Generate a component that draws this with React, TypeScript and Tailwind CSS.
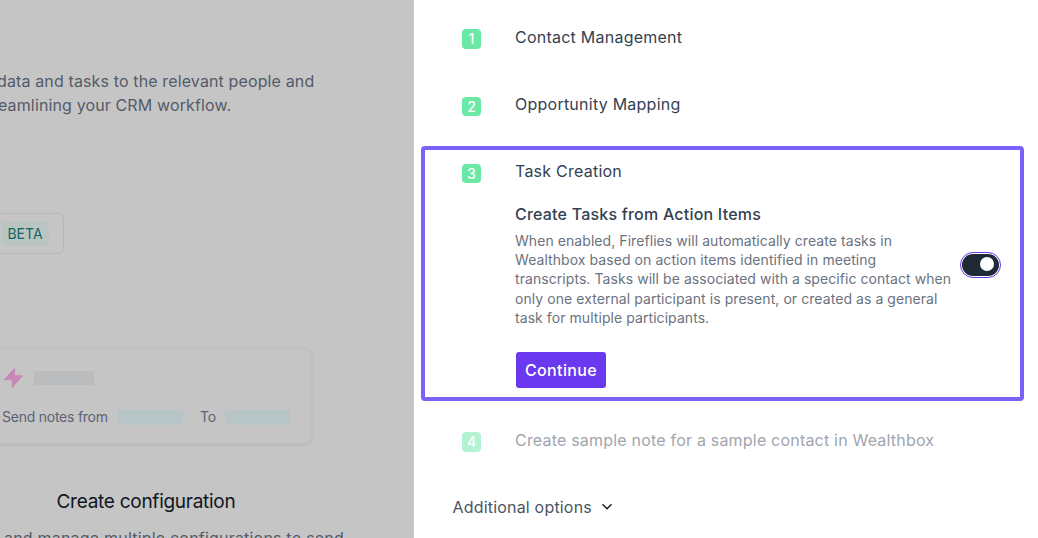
import type { ReactNode } from "react";

function StepBadge({ n, badgeClass = "h-[19px] mt-[5px]", faded = false }: { n: number; badgeClass?: string; faded?: boolean }) {
  return (
    <span
      className={`flex w-[19px] shrink-0 items-center justify-center rounded-[4px] text-[14px] font-medium leading-5 text-white ${badgeClass} ${
        faded ? "bg-[#b4f3d2]" : "bg-[#6ae8a6]"
      }`}
    >
      {n}
    </span>
  );
}

interface StepProps {
  n: number;
  title: string;
  titleClass?: string;
  badgeClass?: string;
  faded?: boolean;
  children?: ReactNode;
}

function Step({ n, title, titleClass = "tracking-[0.24px]", badgeClass, faded = false, children }: StepProps) {
  return (
    <div className="flex gap-[34px]">
      <StepBadge n={n} badgeClass={badgeClass} faded={faded} />
      <div>
        <h3
          className={`whitespace-nowrap text-[16px] font-normal leading-6 ${titleClass} ${
            faded ? "text-[#a0a5b0]" : "text-[#343f52]"
          }`}
        >
          {title}
        </h3>
        {children}
      </div>
    </div>
  );
}

function Toggle() {
  return (
    <button
      role="switch"
      aria-checked="true"
      className="flex h-[26px] w-[41px] shrink-0 items-center rounded-full border border-[#6938ef] bg-white p-px"
    >
      <span className="flex h-[22px] w-full items-center justify-end rounded-full bg-[#1f2a37] pr-[5px] pb-0.5">
        <span className="h-[14px] w-[14px] rounded-full bg-white" />
      </span>
    </button>
  );
}

function Background() {
  return (
    <div className="flex h-full w-[414px] shrink-0 flex-col items-start overflow-hidden bg-[#c5c5c5] whitespace-nowrap">
      <p className="mt-[69px] -ml-[3px] shrink-0 text-[16px] leading-6 tracking-[0.13px] text-[#545b69]">
        data and tasks to the relevant people and
      </p>
      <p className="-ml-[2px] shrink-0 text-[16px] leading-6 tracking-[0.13px] text-[#545b69]">eamlining your CRM workflow.</p>

      <div className="mt-24 -ml-2 flex h-[41px] w-[72px] shrink-0 items-center rounded-r-[5px] border border-[#b8b9bb] pl-2">
        <span className="flex h-6 w-12 items-center justify-center rounded-[5px] bg-[#bac5c3] text-[14px] text-[#14665c]">
          BETA
        </span>
      </div>

      <div className="mt-[94px] -ml-2 h-[96px] w-[320px] shrink-0 rounded-[8px] border border-[#bfbfc0] pl-[9px] pt-[18px] shadow-[0_1px_3px_rgba(0,0,0,0.07)]">
        <div className="flex items-center">
          <svg width="21" height="22" viewBox="0 0 21 22" fill="#c887b4" stroke="#c887b4" strokeWidth="0.8" strokeLinejoin="round">
            <path d="M12.6 1.3 2.2 12.7h8V20.5L20.6 8.7h-8Z" />
          </svg>
          <span className="ml-[11px] h-[14px] w-[60px] rounded-[2px] bg-[#bbbcbe]" />
        </div>
        <div className="mt-[18px] flex h-5 items-center text-[14px] leading-5 text-[#5d6373]">
          <span className="w-[116px] tracking-[-0.24px]">Send notes from</span>
          <span className="h-[15px] w-[65px] rounded-[2px] bg-[#b8c5c7]" />
          <span className="ml-[17px] w-[25px] tracking-[-0.24px]">To</span>
          <span className="h-[15px] w-[65px] rounded-[2px] bg-[#b8c5c7]" />
        </div>
      </div>

      <h2 className="mt-[44px] ml-[56.5px] shrink-0 text-[19px] leading-7 tracking-[-0.27px] text-[#101522]">Create configuration</h2>
      <p className="mt-[10px] ml-[4px] shrink-0 text-[16px] leading-6 tracking-[0.2px] text-[#545b69]">
        and manage multiple configurations to send
      </p>
    </div>
  );
}

export default function App() {
  return (
    <main className="flex h-[538px] w-[1038px] overflow-hidden bg-white font-['Inter',sans-serif]">
      <Background />
      <section className="flex flex-1 flex-col">
        <div className="mt-[25px] pl-12">
          <Step n={1} title="Contact Management" badgeClass="mt-1 h-5" />
        </div>
        <div className="mt-[43px] pl-12">
          <Step n={2} title="Opportunity Mapping" />
        </div>
        <div className="mt-[30px] ml-[7px] h-[255px] w-[603px] rounded-[4px] border-4 border-[#7b61f8] pl-[37px] pt-[9px]">
          <Step n={3} title="Task Creation">
            <h4 className="mt-[19px] text-[16px] font-medium leading-6 tracking-[0.21px] text-[#343f52]">
              Create Tasks from Action Items
            </h4>
            <div className="mt-[5px] flex w-[486px] items-center justify-between">
              <p className="whitespace-nowrap text-[14px] leading-[19.2px] tracking-[0.065px] text-[#6b7280]">
                When enabled, Fireflies will automatically create tasks in
                <br />
                Wealthbox based on action items identified in meeting
                <br />
                transcripts. Tasks will be associated with a specific contact when
                <br />
                only one external participant is present, or created as a general
                <br />
                task for multiple participants.
              </p>
              <div className="-mt-[29px]">
                <Toggle />
              </div>
            </div>
            <button className="mt-[25px] ml-px flex h-9 w-[90px] items-center justify-center rounded-[3px] bg-[#6938ef] text-[16px] font-medium tracking-[0.35px] text-white">
              Continue
            </button>
          </Step>
        </div>
        <div className="mt-[27px] pl-12">
          <Step
            n={4}
            title="Create sample note for a sample contact in Wealthbox"
            titleClass="tracking-[0.2px]"
            badgeClass="mt-1 h-5"
            faded
          />
        </div>
        <button className="mt-[43px] ml-[38.5px] flex items-center self-start text-[16px] leading-6 tracking-[0.19px] text-[#4b5563]">
          Additional options
          <svg className="ml-[9px]" width="12" height="12" viewBox="0 0 12 12" fill="none" stroke="#111827" strokeWidth="1.4">
            <path d="m1.5 3.2 4.5 4.5 4.5-4.5" />
          </svg>
        </button>
      </section>
    </main>
  );
}
